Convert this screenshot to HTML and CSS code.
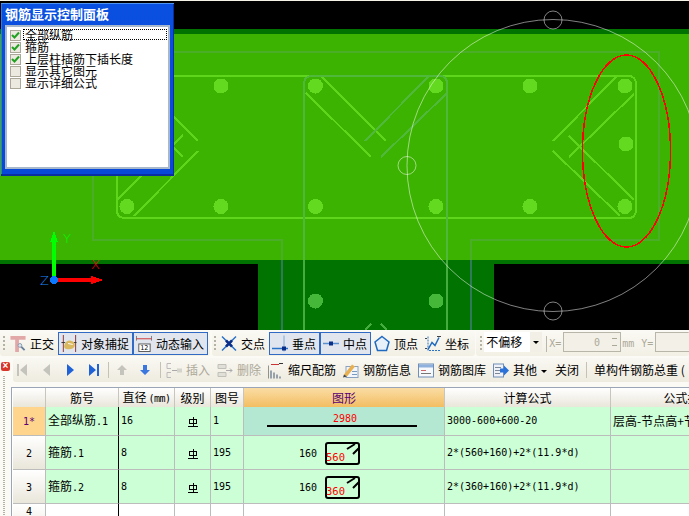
FILE: index.html
```
<!DOCTYPE html>
<html lang="en">
  <head>
    <meta charset="UTF-8" />
    <title>钢筋显示控制面板</title>
    <link rel="stylesheet" href="styles.css">
  </head>
  <body>
    <svg class="defs">
      <symbol id="grade" viewBox="0 0 10 10">
        <path d="M1.5 6.5V3.5Q1.5 2 3 2H7Q8.5 2 8.5 3.5V6.5H1.5M5 0V9M0 9.500H10" fill="none" stroke="#000" shape-rendering="crispEdges"/>
      </symbol>
      <symbol id="tick" viewBox="0 0 9 9">
        <path d="M1 4L3.5 6.5L8 1.5" fill="none" stroke="#21a121" stroke-width="2"/>
      </symbol>
      <symbol id="stirrup" viewBox="0 0 36 24">
        <rect x="1" y="2" width="33" height="21" rx="2" fill="none" stroke="#000" stroke-width="2"/>
        <path d="M22 8L30 3M28 13L34 7" stroke="#000" stroke-width="2"/>
      </symbol>
    </svg>

    <div class="viewport">
      <svg class="cad" width="689" height="330" viewBox="0 0 689 330" shape-rendering="crispEdges">
        <rect width="689" height="1" fill="#f5f3e8"/>
        <rect y="1" width="689" height="329" fill="#000"/>
        <rect y="29" width="689" height="5" fill="#007300"/>
        <rect y="34" width="689" height="226" fill="#3cb300"/>
        <rect y="260" width="689" height="4" fill="#007300"/>
        <rect x="258" y="260" width="236" height="70" fill="#007300"/>

        <g fill="none" stroke-width="2">
          <path d="M93 52H659V240H471V260M93 52V240H282V260" stroke="#4aae28"/>
          <path d="M282 260V330M471 260V330" stroke="#2f7a58"/>

          <g stroke="#5fd61c">
            <path d="M125 76H628Q636 76 636 84V210Q636 218 628 218H125Q117 218 117 210V84Q117 76 125 76"/>
            <path d="M617 76L553 141M634 94L569 157M569 136L634 200M553 151L620 216"/>
            <path d="M134 76L198 141M117 92L183 157M183 135L118 199M198 151L134 216"/>
            <path d="M321 76L386 141M306 93L371 157"/>
          </g>
          <path d="M304 260V84Q304 76 312 76H440Q447 76 447 84V260" stroke="#50b83a"/>
          <path d="M429 76L365 141M447 93L381 157" stroke="#50b83a"/>
          <path d="M304 260V330M447 260V330M371 324L365 330M381 324L387 330" stroke="#45ad3e"/>
        </g>

        <g fill="#63d91f">
          <circle cx="127" cy="86" r="7.5"/>
          <circle cx="221" cy="86" r="7.5"/>
          <circle cx="315.500" cy="86" r="7.5"/>
          <circle cx="436" cy="86" r="7.5"/>
          <circle cx="530" cy="86" r="7.5"/>
          <circle cx="625" cy="86" r="7.5"/>
          <circle cx="626" cy="144" r="7.5"/>
          <circle cx="127" cy="206.500" r="7.5"/>
          <circle cx="221" cy="206.500" r="7.5"/>
          <circle cx="315.500" cy="206.500" r="7.5"/>
          <circle cx="436" cy="206.500" r="7.5"/>
          <circle cx="530" cy="206.500" r="7.5"/>
          <circle cx="625" cy="206.500" r="7.5"/>
        </g>
        <g fill="#45b83a">
          <circle cx="315.500" cy="301" r="7.5"/>
          <circle cx="436" cy="301" r="7.5"/>
        </g>

        <g fill="none" stroke="#fff" stroke-opacity=".5" shape-rendering="auto">
          <circle cx="553" cy="165.500" r="146"/>
          <circle cx="553" cy="20" r="9"/>
          <circle cx="553" cy="311" r="9"/>
          <circle cx="407" cy="165.500" r="9"/>
        </g>
        <ellipse cx="626.500" cy="151" rx="44" ry="96" fill="none" stroke="#f00" stroke-width="1.500"/>

        <rect x="52" y="240" width="4" height="40" fill="#0f0"/>
        <path d="M54 231L58 242H50Z" fill="#0f0"/>
        <rect x="54" y="278" width="40" height="4" fill="#f00"/>
        <path d="M91 276L103 280L91 284Z" fill="#f00"/>
        <circle cx="54" cy="280" r="4" fill="#0a78ff"/>
        <g class="axisText" shape-rendering="auto">
          <text x="63" y="243" fill="#0f0">Y</text>
          <text x="91" y="269" fill="#f00">X</text>
          <text x="40" y="285" fill="#1f8aff">Z</text>
        </g>
      </svg>

      <div class="ctrlPanel">
        <div class="ctrlTitle">钢筋显示控制面板</div>
        <div class="ctrlList">
          <div class="ctrlRow"><span class="chk"><svg width="9" height="9"><use href="#tick"/></svg></span><span class="ctrlLabel focusRow">全部纵筋</span></div>
          <div class="ctrlRow"><span class="chk"><svg width="9" height="9"><use href="#tick"/></svg></span><span class="ctrlLabel">箍筋</span></div>
          <div class="ctrlRow"><span class="chk"><svg width="9" height="9"><use href="#tick"/></svg></span><span class="ctrlLabel">上层柱插筋下插长度</span></div>
          <div class="ctrlRow"><span class="chk"></span><span class="ctrlLabel">显示其它图元</span></div>
          <div class="ctrlRow"><span class="chk"></span><span class="ctrlLabel">显示详细公式</span></div>
        </div>
      </div>
    </div>

    <div class="snapBar">
      <div class="tb tbA">
        <span class="grip"></span>
        <span class="tool">
          <svg class="ico" viewBox="0 0 16 18"><path d="M0 1H16V5H9V18H5V5H0Z" fill="#e2a8a8"/><path d="M10 11L15 16" stroke="#6a7f9a" stroke-width="2"/><circle cx="10" cy="11" r="2" fill="#dde6f0" stroke="#89a"/></svg>
          正交
        </span>
        <span class="tool on">
          <svg class="ico" viewBox="0 0 16 18"><path d="M2 0V18M15 0V18" stroke="#8a3030"/><path d="M0 8H4M13 8H16" stroke="#333"/><path d="M3 11Q5 5 10 6Q15 7 14 12Q12 16 6 15Q2 14 3 11Z" fill="#d9b860"/><path d="M7 9L12 10" stroke="#fff"/></svg>
          对象捕捉
        </span>
        <span class="tool on">
          <svg class="ico" viewBox="0 0 16 18"><path d="M0 1V6M16 1V6" stroke="#777"/><path d="M0 4H16" stroke="#c33"/><rect x="2.500" y="9.500" width="12" height="8" fill="#fff" stroke="#555"/><text class="icoNum" x="4" y="16">12</text></svg>
          动态输入
        </span>
      </div>
      <div class="tb tbB">
        <span class="grip"></span>
        <span class="tool">
          <svg class="ico" viewBox="0 0 16 16"><path d="M1 1L15 15M15 1L1 15" stroke="#2a72c8" stroke-width="1.500"/><path d="M5 5L11 11M11 5L5 11" stroke="#0a2f88" stroke-width="2.500"/></svg>
          交点
        </span>
        <span class="tool on">
          <svg class="ico" viewBox="0 0 16 16"><path d="M12 0V16" stroke="#7ea6d8"/><path d="M0 13H16" stroke="#2a72c8" stroke-width="1.500"/><rect x="10" y="11" width="4" height="4" fill="#0a2f88"/></svg>
          垂点
        </span>
        <span class="tool on">
          <svg class="ico" viewBox="0 0 16 16"><path d="M0 8H16" stroke="#5a8fd0" stroke-width="1.500"/><rect x="6" y="6" width="4" height="4" fill="#0a2f88"/></svg>
          中点
        </span>
        <span class="tool">
          <svg class="ico" viewBox="0 0 16 16"><path d="M8 1L15 6.500L12.500 15H3.500L1 6.500Z" fill="#e8f0fa" stroke="#1f6ac0" stroke-width="1.500"/></svg>
          顶点
        </span>
        <span class="tool">
          <svg class="ico" viewBox="0 0 16 16"><path d="M3 1V15H15" fill="none" stroke="#2a72c8" stroke-dasharray="2 1"/><path d="M3 14L7 7L10 10L14 2" fill="none" stroke="#1f6ac0" stroke-width="1.500"/><path d="M0 3H2M12 1H16M0 13H2" stroke="#444"/></svg>
          坐标
        </span>
      </div>
      <div class="tb tbC">
        <span class="grip"></span>
        <span class="combo">不偏移<span class="comboArrow"></span></span>
        <span class="vSep"></span>
        <span class="axisLabel">X=</span>
        <span class="spinner"><span class="spinVal">0</span><span class="spinArrows"></span></span>
        <span class="axisLabel">mm</span>
        <span class="axisLabel yLabel">Y=</span>
        <span class="spinner"></span>
      </div>
    </div>

    <div class="lower">
      <div class="dock">
        <span class="dockClose">×</span>
        <span class="dockGrip"></span>
      </div>
      <div class="mainCol">
        <div class="rebarBar">
          <span class="navGroup">
            <svg class="nav" viewBox="0 0 10 14"><path d="M0 1H2V13H0ZM10 1V13L3 7Z" fill="#c4c4bc"/></svg>
            <svg class="nav" viewBox="0 0 10 14"><path d="M9 1V13L2 7Z" fill="#c4c4bc"/></svg>
            <svg class="nav" viewBox="0 0 10 14"><path d="M2 1V13L9 7Z" fill="#1f62d8"/></svg>
            <svg class="nav" viewBox="0 0 10 14"><path d="M0 1V13L7 7ZM8 1H10V13H8Z" fill="#1f62d8"/></svg>
          </span>
          <span class="barSep firstSep"></span>
          <span class="navGroup moveGroup">
            <svg class="nav" viewBox="0 0 10 12"><path d="M5 1L10 6H7V11H3V6H0Z" fill="#c4c4bc"/></svg>
            <svg class="nav" viewBox="0 0 10 12"><path d="M3 1H7V6H10L5 11L0 6H3Z" fill="#3a78e0"/></svg>
          </span>
          <span class="barSep secondSep"></span>
          <span class="tool off">
            <svg class="ico" viewBox="0 0 16 16"><path d="M1 1H5M1 1V6H5M1 10H5M1 10V15H5" fill="none" stroke="#bbb"/><rect x="11" y="6" width="5" height="4" fill="#d4d4cc"/><path d="M6 8H11" stroke="#aaa"/></svg>
            插入
          </span>
          <span class="tool off">
            <svg class="ico" viewBox="0 0 16 16"><path d="M1 2H9V6H1ZM1 10H9V14H1Z" fill="#e0e0d8" stroke="#c0c0b8"/><path d="M9 8H15M13 6L15 8L13 10" fill="none" stroke="#aaa"/></svg>
            删除
          </span>
          <span class="tool">
            <svg class="ico" viewBox="0 0 16 16"><path d="M0 3V16" stroke="#333"/><path d="M3 2H11" stroke="#c33"/><path d="M11 1H15" stroke="#333"/><path d="M3 8V16M6 10V16M9 12V16M12 14V16" stroke="#7a8898" stroke-width="1.500"/></svg>
            缩尺配筋
          </span>
          <span class="tool">
            <svg class="ico" viewBox="0 0 16 16"><rect x="3" y="4" width="12" height="11" fill="#f2f6fb" stroke="#8aa2c0"/><path d="M1 12L9 2L12 4L4 14Z" fill="#e8b050"/><path d="M1 12L0 15L4 14Z" fill="#444"/><path d="M9 9H14M9 12H14" stroke="#7a9ac0"/></svg>
            钢筋信息
          </span>
          <span class="tool">
            <svg class="ico" viewBox="0 0 16 16"><rect x=".5" y="1.500" width="15" height="13" fill="#f7f8fb" stroke="#6f8fb8"/><rect x="1" y="2" width="14" height="3" fill="#8fb0dc"/><path d="M3 8H8" stroke="#c66"/><path d="M3 11H13" stroke="#777"/></svg>
            钢筋图库
          </span>
          <span class="tool more">
            <svg class="ico" viewBox="0 0 16 16"><rect x=".5" y="1.500" width="10" height="13" fill="#eef2f8" stroke="#6f8fb8"/><path d="M2 5H8M2 8H7M2 11H7" stroke="#7a8898"/><path d="M7 6H11V3L16 8L11 13V10H7Z" fill="#2a72d8"/></svg>
            其他<span class="caret"></span>
          </span>
          <span class="plainBtn">关闭</span>
          <span class="barSep thirdSep"></span>
          <span class="totalText">单构件钢筋总重 (</span>
        </div>

        <div class="gridWrap">
          <table class="rebarGrid">
            <colgroup>
              <col class="cHead"><col class="cNo"><col class="cDia"><col class="cGrade"><col class="cFig"><col class="cShape"><col class="cCalc"><col class="cDesc">
            </colgroup>
            <thead>
              <tr>
                <th></th>
                <th>筋号</th>
                <th>直径<span class="unit">(mm)</span></th>
                <th>级别</th>
                <th>图号</th>
                <th class="thActive">图形</th>
                <th>计算公式</th>
                <th>公式描述</th>
              </tr>
            </thead>
            <tbody>
              <tr class="rowShort">
                <td class="rowHead rowHeadCur"><span class="num">1*</span></td>
                <td class="cellNo">全部纵筋<span class="num">.1</span></td>
                <td class="num">16</td>
                <td class="center"><svg class="gradeIco"><use href="#grade"/></svg></td>
                <td class="num">1</td>
                <td class="cellBar"><div class="barShape"><span class="num barLen">2980</span></div></td>
                <td class="num">3000-600+600-20</td>
                <td>层高-节点高+节点高-保护层</td>
              </tr>
              <tr class="rowTall">
                <td class="rowHead"><span class="num">2</span></td>
                <td class="cellNo">箍筋<span class="num">.1</span></td>
                <td class="num">8</td>
                <td class="center"><svg class="gradeIco"><use href="#grade"/></svg></td>
                <td class="num">195</td>
                <td>
                  <div class="hoopShape">
                    <span class="num hoopLen">160</span>
                    <svg class="hoop" width="36" height="24"><use href="#stirrup"/><text x="1" y="20">560</text></svg>
                  </div>
                </td>
                <td class="num">2*(560+160)+2*(11.9*d)</td>
                <td></td>
              </tr>
              <tr class="rowTall">
                <td class="rowHead"><span class="num">3</span></td>
                <td class="cellNo">箍筋<span class="num">.2</span></td>
                <td class="num">8</td>
                <td class="center"><svg class="gradeIco"><use href="#grade"/></svg></td>
                <td class="num">195</td>
                <td>
                  <div class="hoopShape">
                    <span class="num hoopLen">160</span>
                    <svg class="hoop" width="36" height="24"><use href="#stirrup"/><text x="1" y="20">360</text></svg>
                  </div>
                </td>
                <td class="num">2*(360+160)+2*(11.9*d)</td>
                <td></td>
              </tr>
              <tr class="rowEmpty">
                <td class="rowHead"><span class="num">4</span></td>
                <td class="cellNo"></td><td></td><td></td><td></td><td></td><td></td><td></td>
              </tr>
            </tbody>
          </table>
        </div>
      </div>
    </div>
  </body>
</html>
```

FILE: styles.css
```
html, body {
  margin: 0;
  padding: 0;
}
body {
  width: 689px;
  height: 516px;
  overflow: hidden;
  background: #fbfaf4;
  color: #000;
  font: 12px/12px "Noto Sans CJK SC", "Liberation Sans", sans-serif;
}
.defs {
  display: none;
}

/* cad view */
.viewport {
  position: relative;
  height: 330px;
}
.cad {
  display: block;
}
.axisText {
  font: 13px "DejaVu Sans Light", "DejaVu Sans", sans-serif;
}
.ctrlPanel {
  position: absolute;
  left: 1px;
  top: 3px;
  width: 173px;
  height: 173px;
  box-sizing: border-box;
  padding: 0 4px 5px;
  display: flex;
  flex-direction: column;
  background: linear-gradient(#0a50e0, #0848d8);
  border-bottom: 2px solid #0a2ea0;
  box-shadow: inset 0 1px 0 #4f94ee, inset 1px 0 0 #2f78e8, inset -1px 0 0 #0a2ea0;
}
.ctrlTitle {
  height: 22px;
  flex: none;
  line-height: 22px;
  color: #fff;
  font-size: 13px;
  font-weight: bold;
  white-space: nowrap;
}
.ctrlList {
  flex: 1;
  border: 2px solid #a8b8cc;
  background: #fff;
  padding: 2px 1px 0 3px;
}
.ctrlRow {
  display: flex;
  align-items: center;
  gap: 2px;
  height: 12px;
}
.chk {
  flex: none;
  width: 11px;
  height: 11px;
  box-sizing: border-box;
  border: 1px solid #aca899;
  background: #ece9e0;
  display: flex;
  align-items: center;
  justify-content: center;
}
.ctrlLabel {
  flex: 1;
  margin-top: -1px;
  padding-left: 2px;
  line-height: 11px;
  white-space: nowrap;
}
.focusRow {
  outline: 1px dotted #000;
  outline-offset: -1px;
}

/* toolbars */
.snapBar {
  display: flex;
  margin-top: 1px;
  height: 26px;
}
.tb {
  display: flex;
  align-items: center;
  height: 25px;
  background: linear-gradient(#faf9f3, #f2f0e5);
  border-radius: 3px;
}
.tbA {
  padding: 0 2px 0 3px;
}
.tbB {
  margin-left: 2px;
  padding: 0 2px;
}
.tbC {
  flex: 1;
  margin-left: 1px;
  padding-left: 4px;
  overflow: hidden;
}
.grip {
  flex: none;
  width: 2px;
  height: 15px;
  margin-right: 2px;
  background: repeating-linear-gradient(#b4b2a4 0 2px, transparent 2px 4px);
}
.tool {
  flex: none;
  box-sizing: border-box;
  display: flex;
  align-items: center;
  gap: 4px;
  height: 23px;
  padding: 0 4px 0 3px;
  white-space: nowrap;
}
.tool.on {
  background: #e1e6ee;
  box-shadow: inset 0 0 0 1px #316ac5;
}
.tool.off {
  color: #aca899;
}
.ico {
  flex: none;
  width: 16px;
  height: 17px;
}
.icoNum {
  font: 7px "DejaVu Sans Mono", monospace;
}
.combo {
  flex: none;
  box-sizing: border-box;
  width: 58px;
  height: 20px;
  padding-left: 2px;
  display: flex;
  align-items: center;
  justify-content: space-between;
  background: #fff;
  margin-top: -3px;
}
.comboArrow {
  width: 12px;
  height: 20px;
  background: #f2f0e6;
  position: relative;
}
.comboArrow::after {
  content: '';
  position: absolute;
  left: 3px;
  top: 9px;
  border: 3px solid transparent;
  border-top-color: #000;
}
.vSep {
  flex: none;
  width: 1px;
  height: 16px;
  margin: 0 2px 0 4px;
  background: #b8b6a8;
}
.axisLabel {
  flex: none;
  width: 12px;
  color: #aca899;
  font: 10px/12px "DejaVu Sans Mono", monospace;
}
.yLabel {
  margin-left: 7px;
}
.spinner {
  flex: none;
  box-sizing: border-box;
  width: 58px;
  height: 20px;
  margin: -3px 1px 0 2px;
  border: 1px solid #b8b6a8;
  background: #f3f1e7;
  display: flex;
  align-items: center;
  justify-content: flex-end;
  color: #aca899;
  font: 10px "DejaVu Sans Mono", monospace;
}
.spinVal {
  margin-right: 8px;
}
.spinArrows {
  width: 12px;
  height: 16px;
  background:
    linear-gradient(to top, #aca899 50%, transparent 50%) center 3px / 5px 2px no-repeat,
    linear-gradient(#aca899 50%, transparent 50%) center 11px / 5px 2px no-repeat;
}

/* lower part */
.lower {
  display: flex;
  height: 160px;
}
.dock {
  flex: none;
  width: 11px;
  display: flex;
  flex-direction: column;
  align-items: flex-start;
}
.dockClose {
  box-sizing: border-box;
  width: 9px;
  height: 9px;
  margin: 5px 0 0 1px;
  border-radius: 2px;
  background: #d8362a;
  color: #fff;
  font: bold 10px/8px "Liberation Sans", sans-serif;
  text-align: center;
}
.dockGrip {
  flex: 1;
  width: 2px;
  margin: 5px 0 0 3px;
  background: repeating-linear-gradient(#b4b2a4 0 1px, transparent 1px 2px);
}
.mainCol {
  flex: 1;
  min-width: 0;
}
.rebarBar {
  display: flex;
  align-items: center;
  height: 24px;
  margin: 1px 0 5px 2px;
  padding-left: 4px;
  background: linear-gradient(#f9f8f2, #eeebdf);
  border-radius: 3px 0 0 3px;
  overflow: hidden;
}
.navGroup {
  flex: none;
  display: flex;
  align-items: center;
  gap: 14px;
}
.moveGroup {
  gap: 13px;
}
.nav {
  width: 10px;
  height: 14px;
}
.barSep {
  flex: none;
  width: 1px;
  height: 16px;
  background: #c4c2b4;
}
.firstSep {
  margin: 0 8px 0 9px;
}
.secondSep {
  margin: 0 2px 0 10px;
}
.thirdSep {
  margin: 0 7px 0 3px;
}
.caret {
  width: 0;
  height: 0;
  margin-top: 3px;
  border: 3px solid transparent;
  border-top-color: #000;
  border-bottom-width: 0;
}
.more {
  padding-right: 3px;
}
.plainBtn {
  flex: none;
  padding: 0 4px 0 5px;
}
.totalText {
  flex: none;
  white-space: nowrap;
}

/* grid */
.gridWrap {
  height: 129px;
  overflow: hidden;
  border-top: 1px solid #9aa6b8;
  border-left: 1px solid #9aa6b8;
  padding-left: 1px;
  background: #fff;
}
.rebarGrid {
  table-layout: fixed;
  width: 752px;
  border-collapse: separate;
  border-spacing: 0;
}
.cHead { width: 33px; }
.cNo { width: 73px; }
.cDia { width: 56px; }
.cGrade { width: 36px; }
.cFig { width: 33px; }
.cShape { width: 201px; }
.cCalc { width: 166px; }
.cDesc { width: 154px; }
.rebarGrid th {
  height: 19px;
  box-sizing: border-box;
  padding: 0;
  border-right: 1px solid #c8c6bc;
  background: linear-gradient(#fff, #e9e6da);
  font-weight: normal;
  white-space: nowrap;
  overflow: hidden;
}
.rebarGrid .thActive {
  background: linear-gradient(#fbdda4, #f2bd62);
  color: #5a0078;
}
.unit {
  font: 10px "DejaVu Sans Mono", monospace;
  letter-spacing: -.5px;
  margin-left: 2px;
}
.rebarGrid td {
  box-sizing: border-box;
  padding: 0 0 0 2px;
  border-right: 1px solid #bcbcbc;
  border-bottom: 1px solid #bcbcbc;
  background: #ccffd6;
  white-space: nowrap;
  overflow: hidden;
}
.rowShort td { height: 29px; }
.rowTall td { height: 34px; }
.rowEmpty td {
  height: 34px;
  background: #fff;
  vertical-align: top;
  padding-top: 5px;
}
.rebarGrid .rowHead {
  padding: 0;
  text-align: center;
  background: linear-gradient(#fff, #e9e6da);
}
.rebarGrid .rowHeadCur {
  background: #ffd48c;
  color: #5a0078;
}
.rebarGrid .cellNo {
  border-right-color: #000;
}
.rebarGrid .center {
  padding: 0;
  text-align: center;
}
.rebarGrid .cellBar {
  background: #b4e8d2;
  padding: 0;
}
.num {
  font: 10px/12px "DejaVu Sans Mono", monospace;
}
.gradeIco {
  width: 10px;
  height: 10px;
  vertical-align: middle;
}
.barShape {
  box-sizing: border-box;
  width: 150px;
  height: 14px;
  margin: -2px 0 0 23px;
  padding-left: 6px;
  text-align: center;
  border-bottom: 2px solid #000;
}
.barLen {
  display: block;
  color: #f00;
}
.hoopShape {
  display: flex;
  align-items: center;
  gap: 8px;
  padding-left: 53px;
}
.hoopLen {
  margin-top: 3px;
}
.hoop text {
  fill: #f00;
  font: 10.5px "DejaVu Sans Mono", monospace;
}
```
